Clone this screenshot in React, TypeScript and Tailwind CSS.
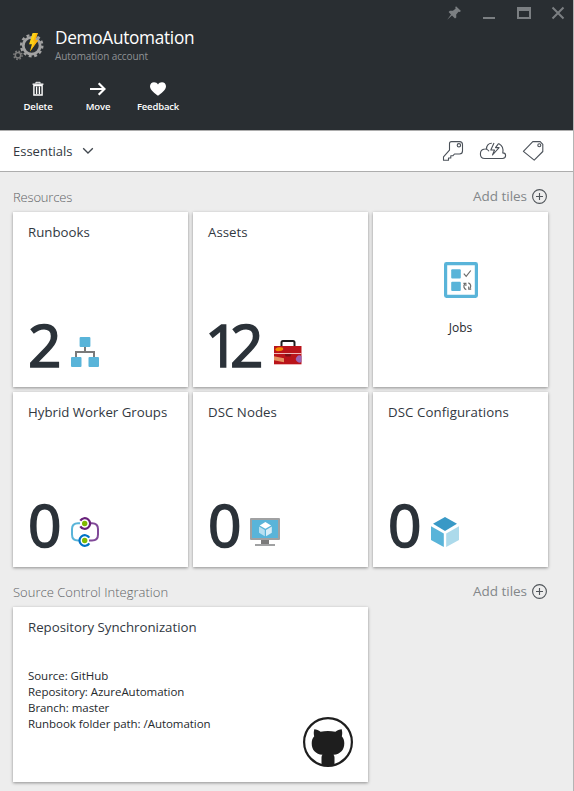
import type { ReactNode } from "react";

function AutomationIcon() {
  return (
    <svg width="32" height="38" viewBox="12 28 32 38" fill="none">
      <circle cx="31.7" cy="45.7" r="8.4" stroke="#a3a3a3" strokeWidth="2.8" />
      <circle cx="31.7" cy="45.7" r="10.6" stroke="#a3a3a3" strokeWidth="2.4" strokeDasharray="2.9 2.65" />
      <circle cx="18" cy="55.3" r="2.7" stroke="#7d7d7d" strokeWidth="1.5" />
      <circle cx="18" cy="55.3" r="4.1" stroke="#7d7d7d" strokeWidth="1.5" strokeDasharray="1.6 1.62" />
      <path d="M32.6 33h5.2l-2.6 7.2h2.9L30 51.6l1.9-7.4h-2.8z" fill="#fcd116" />
      <path d="M36.2 33h1.6l-2.6 7.2h2.9L30 51.6l5-10h-2z" fill="#ffb30a" />
    </svg>
  );
}

function TrashIcon() {
  return (
    <svg width="16" height="16" viewBox="0 0 16 16" fill="none" stroke="#fff">
      <path d="M2.6 3.2h10.8" strokeWidth="1.4" />
      <path d="M5.9 2.6V1.3h4.2v1.3" strokeWidth="1" />
      <path d="M3.9 4.6V14h8.2V4.6z" strokeWidth="1.4" />
      <path d="M6.5 5.5v7.4M9.5 5.5v7.4" strokeWidth="1.1" />
      <path d="M8 5.5v7.4" strokeWidth=".7" strokeOpacity=".6" />
    </svg>
  );
}

function ArrowIcon() {
  return (
    <svg width="16" height="16" viewBox="0 0 16 16" fill="none" stroke="#fff" strokeWidth="2.2">
      <path d="M0 8h14.5M8.7 2.2l5.8 5.8-5.8 5.8" />
    </svg>
  );
}

function HeartIcon() {
  return (
    <svg width="18" height="16" viewBox="0 0 18 16" fill="#fff">
      <path d="M9 14.8C6.5 12.8 1 9.5 1 5.3 1 2.8 2.8 1.2 5 1.2c1.8 0 3.2.9 4 2.3.8-1.4 2.2-2.3 4-2.3 2.2 0 4 1.6 4 4.1 0 4.2-5.5 7.5-8 9.5z" />
    </svg>
  );
}

function WindowControls() {
  return (
    <svg width="120" height="16" viewBox="446 5 120 16" fill="none" stroke="#7b7f82">
      <path d="M456 6.2l5 4.8-1.4.9-1.1-.2-2.3 2.8.1 2.9-1.3 1-3-3-4.8 4.4 3.8-5.3-2.4-2.5 1.3-1.3 3 .1 2.7-2.1-.3-1.4z" fill="#7b7f82" stroke="none" />
      <path d="M483 18h12" strokeWidth="2" />
      <path d="M518 7v11h12V7" strokeWidth="2" />
      <path d="M517 9h14" strokeWidth="4" />
      <path d="M552.5 7.5l11 11M563.5 7.5l-11 11" strokeWidth="2" />
    </svg>
  );
}

function EssentialsIcons() {
  return (
    <svg width="104" height="24" viewBox="441 139 104 24" fill="none" stroke="#4b5159" strokeWidth="1.1" strokeLinejoin="round">
      <path d="M451.500 141.600h8a3 3 0 0 1 3 3v6.400a3 3 0 0 1-3 3h-5l-1.500 1.700h-2.200v2.300h-2.300v2.300h-5v-3.400l6-6.800v-6.500a2 2 0 0 1 2-2z" />
      <circle cx="458.900" cy="145.300" r="1.700" />
      <path d="M489 151.200c-.8-1.400-2.400-2.400-4.200-2.200-2.600.2-4.400 2.300-4.400 4.900s1.700 4.600 4.300 4.600h17.800c1.800 0 3.100-1.200 3.100-2.900 0-1.600-1.200-2.700-2.800-2.700.7-4-.5-7.400-3.800-9.100" />
      <path d="M486.600 149c-.3-3.200 1.900-5.900 5.200-5.800" />
      <path d="M494 143l-3.200 7h3.700l-2 5 6.600-7.400h-3.600l3.200-4.300" />
      <path d="M532.800 141.600h7.400l2.600 2.700v7.200l-8.600 8.700-10.800-8.900z" />
      <circle cx="539.300" cy="145.200" r="1.500" />
    </svg>
  );
}

function RunbookIcon() {
  return (
    <svg width="28" height="30" viewBox="0 0 28 30">
      <path d="M14 10v5M5 21v-6h18v6" fill="none" stroke="#7a7a7a" strokeWidth="2" />
      <g fill="#59b4d9">
        <rect x="8.6" y="0" width="10.8" height="10" rx="1" />
        <rect x="0" y="20" width="10.5" height="10" rx="1" />
        <rect x="17.5" y="20" width="10.5" height="10" rx="1" />
      </g>
    </svg>
  );
}

function BriefcaseIcon() {
  return (
    <svg width="28" height="30" viewBox="0 0 28 30">
      <path d="M7.500 9.500V5.500q0-1.500 1.500-1.500h10q1.500 0 1.500 1.500v4" fill="none" stroke="#1e1e1e" strokeWidth="2" />
      <path d="M0 9h27.500v18H0z" fill="#ba141a" />
      <ellipse cx="5.300" cy="12.200" rx="4" ry="1.900" fill="#f58b00" transform="rotate(-8 5.300 12.200)" />
      <path d="M10.800 17h6.600l-.8 2.400h-5z" fill="#7f1015" />
      <path d="M0 16.500h27.500" stroke="#efb7b8" strokeWidth="1" />
      <path d="M0 19.200l10 2v4L0 23.200z" fill="#e59361" />
      <path d="M27.500 19a3.600 3.600 0 1 0 0 6z" fill="#9c64b5" />
      <path d="M0 27h27.500v1H0z" fill="#edb5b7" />
    </svg>
  );
}

function HybridIcon() {
  return (
    <svg width="28" height="30" viewBox="0 0 28 30" fill="none">
      <path d="M9 6.200H7Q1 6.200 1 12v5.500q0 6 6 6h1" stroke="#59b4d9" strokeWidth="2" />
      <path d="M19 6.200h2q6 0 6 5.800v5.500q0 6-6 6h-3" stroke="#804998" strokeWidth="2" />
      <path d="M9.300 3.700A5.300 5.300 0 1 1 9.300 9.300" stroke="#68217a" strokeWidth="2.2" />
      <path d="M18.300 20.700A5.300 5.300 0 1 0 18.300 26.300" stroke="#0072c6" strokeWidth="2.2" />
      <circle cx="13.7" cy="6.5" r="2.7" fill="#7fba00" />
      <circle cx="13.7" cy="23.5" r="2.7" fill="#7fba00" />
    </svg>
  );
}

function NodeIcon() {
  return (
    <svg width="30" height="30" viewBox="0 0 30 30">
      <path d="M11 22h8v5h-8z" fill="#7a7a7a" />
      <path d="M5 27h20v2H5z" fill="#a0a1a2" />
      <rect x="0" y="1" width="30" height="22" rx="1" fill="#a0a1a2" />
      <path d="M2 3h26v18H2z" fill="#59b4d9" />
      <path d="M15.4 5l5.7 3.4-5.7 3.4-5.7-3.4z" fill="#fff" />
      <path d="M9 9.600l5.800 3.300v6.300L9 15.800z" fill="#b8e0f1" />
      <path d="M21.800 9.600L16 12.900v6.300l5.800-3.400z" fill="#d8edf7" />
    </svg>
  );
}

function CubeIcon() {
  return (
    <svg width="28" height="30" viewBox="0 0 28 30">
      <path d="M14 0l12 6.800L14 14 2 6.800z" fill="#3999c6" />
      <path d="M0 9.200l12.800 7.200V30L0 22.900z" fill="#59b4d9" />
      <path d="M28 9.200l-12.800 7.200V30L28 22.900z" fill="#acdaeb" />
    </svg>
  );
}

function JobsIcon() {
  return (
    <svg width="34" height="36" viewBox="0 0 34 36" fill="none">
      <rect x="1.6" y="1.6" width="30.8" height="32.8" rx=".8" stroke="#59b4d9" strokeWidth="3.2" />
      <rect x="7.200" y="7.200" width="9.6" height="9.4" rx="1" fill="#59b4d9" />
      <rect x="7.200" y="19.700" width="9.6" height="9.4" rx="1" fill="#59b4d9" />
      <path d="M19.800 11.600l2.400 2.700 4.600-5.800" stroke="#6b6b6b" strokeWidth="1.2" />
      <path d="M22.300 27.600a3.400 3.400 0 0 1-1.500-5.600M24.300 20.900a3.400 3.400 0 0 1 1.500 5.600" stroke="#6b6b6b" strokeWidth="1.2" />
      <path d="M19.400 21.400h2.500v2.600M27.200 27.100h-2.500v-2.600" stroke="#6b6b6b" strokeWidth="1.1" />
    </svg>
  );
}

function GitHubIcon() {
  return (
    <svg width="50" height="50" viewBox="0 0 50 50">
      <circle cx="25" cy="25" r="23.9" fill="#fff" stroke="#1e1e1e" strokeWidth="2.2" />
      <path d="M18.500 48v-7.500q0-2 1-2.700C12.500 37 8.700 33 8.700 26.200c0-3 .9-5.200 2.500-7-.6-2-.6-4.600.1-7 2.200 0 4.300 1 6.300 2.500 4.700-.9 10-.9 14.800 0 2-1.500 4-2.500 6.300-2.500.7 2.400.7 5 .1 7 1.600 1.800 2.500 4 2.500 7 0 6.800-3.800 10.800-10.800 11.600.6.700 1 1.700 1 2.700V48A24 24 0 0 1 18.500 48z" fill="#1e1e1e" />
    </svg>
  );
}

function Command({ icon, label, className }: { icon: ReactNode; label: string; className: string }) {
  return (
    <button className="flex w-[60px] flex-col items-center">
      <span className="flex h-4 items-center">{icon}</span>
      <span className={`mt-[3px] whitespace-nowrap text-[9.5px] leading-[14px] font-semibold text-white ${className}`}>{label}</span>
    </button>
  );
}

function SectionHeader({ title, className }: { title: string; className: string }) {
  return (
    <div className="flex h-10 w-[534px] items-start justify-between pt-[15px]">
      <h2 className={`text-[13px] leading-5 font-light text-[#5f6366] ${className}`}>{title}</h2>
      <button className="-mt-px flex items-center text-[#83878a]">
        <span className="text-[13.5px] leading-5 tracking-[-0.02px]">Add tiles</span>
        <svg className="ml-[5px]" width="15" height="15" viewBox="0 0 15 15" fill="none" stroke="#50555a">
          <circle cx="7.5" cy="7.5" r="6.9" strokeWidth="1.1" />
          <path d="M7.500 4v7M4 7.500h7" strokeWidth="1.1" />
        </svg>
      </button>
    </div>
  );
}

const tileClass = "h-[175px] bg-white shadow-[0_1px_3px_rgba(0,0,0,0.4)]";

function CountTile({ title, titleClass, count, countClass, icon }: { title: string; titleClass: string; count: string; countClass: string; icon: ReactNode }) {
  return (
    <div className={`${tileClass} flex flex-col justify-between pt-[10px] pr-2 pb-5 pl-[15px]`}>
      <h3 className={`whitespace-nowrap text-[13.25px] leading-5 text-[#32383f] ${titleClass}`}>{title}</h3>
      <div className="flex h-[43px] items-end">
        <span className={`-mb-[7px] text-[58.5px] leading-[60px] text-[#2b3239] [-webkit-text-stroke:1.7px_#2b3239] ${countClass}`}>{count}</span>
        {icon}
      </div>
    </div>
  );
}

export default function App() {
  return (
    <div className="h-[791px] w-[574px] overflow-hidden border-r border-[#b4b4b4] bg-[#ededed] font-['Open_Sans','Noto_Sans',sans-serif]">
      <header className="-mr-px h-[130px] border-r border-[#43484b] bg-[#292e32]">
        <div className="flex h-7 justify-end pt-[5px] pr-[7px]">
          <WindowControls />
        </div>
        <div className="flex h-[53px] pl-3">
          <AutomationIcon />
          <div className="-mt-[2px] ml-[11px]">
            <h1 className="text-[17.25px] leading-6 tracking-[-0.31px] text-white">DemoAutomation</h1>
            <p className="-mt-px text-[10px] leading-[14px] tracking-[-0.09px] text-[#8f9295]">Automation account</p>
          </div>
        </div>
        <div className="flex pl-2">
          <Command icon={<TrashIcon />} label="Delete" className="tracking-[-0.1px]" />
          <Command icon={<ArrowIcon />} label="Move" className="tracking-[-0.1px]" />
          <Command icon={<HeartIcon />} label="Feedback" className="tracking-[-0.16px]" />
        </div>
      </header>
      <div className="flex h-[42px] items-center justify-between border-y border-[#adadad] bg-white pr-[28px] pl-[13px]">
        <div className="flex items-center">
          <span className="text-[13px] leading-5 text-[#32383f]">Essentials</span>
          <svg className="ml-[9px]" width="12" height="8" viewBox="0 0 12 8" fill="none" stroke="#40474e" strokeWidth="1.3">
            <path d="M1.2 1.2L6 6l4.800-4.800" />
          </svg>
        </div>
        <EssentialsIcons />
      </div>
      <main className="pl-[13px]">
        <SectionHeader title="Resources" className="tracking-[-0.17px]" />
        <div className="grid grid-cols-[175px_175px_175px] gap-[5px]">
          <CountTile title="Runbooks" titleClass="tracking-[0.02px]" count="2" countClass="w-[43px]" icon={<RunbookIcon />} />
          <CountTile title="Assets" titleClass="tracking-[0.02px]" count="12" countClass="-ml-[3px] w-[69px] tracking-[-8.5px]" icon={<BriefcaseIcon />} />
          <div className={`${tileClass} flex flex-col items-center pt-[50px]`}>
            <span className="ml-px h-9"><JobsIcon /></span>
            <span className="mt-[22px] text-[12px] leading-4 text-[#25292d]">Jobs</span>
          </div>
          <CountTile title="Hybrid Worker Groups" titleClass="tracking-[0px]" count="0" countClass="w-[43px]" icon={<HybridIcon />} />
          <CountTile title="DSC Nodes" titleClass="tracking-[0.05px]" count="0" countClass="w-[42px]" icon={<NodeIcon />} />
          <CountTile title="DSC Configurations" titleClass="tracking-[0.08px]" count="0" countClass="w-[43px]" icon={<CubeIcon />} />
        </div>
        <SectionHeader title="Source Control Integration" className="tracking-[0.02px]" />
        <section className={`${tileClass} flex w-[355px] flex-col pt-[10px] pr-[15px] pl-[15px]`}>
          <h3 className="text-[13.25px] leading-5 text-[#32383f]">Repository Synchronization</h3>
          <div className="mt-[31px] flex justify-between">
            <div className="whitespace-nowrap text-[11.5px] leading-4 tracking-[-0.05px] text-[#25292d]">
              <p>Source: GitHub</p>
              <p>Repository: AzureAutomation</p>
              <p>Branch: master</p>
              <p>Runbook folder path: /Automation</p>
            </div>
            <div className="mt-[49px]"><GitHubIcon /></div>
          </div>
        </section>
      </main>
    </div>
  );
}
